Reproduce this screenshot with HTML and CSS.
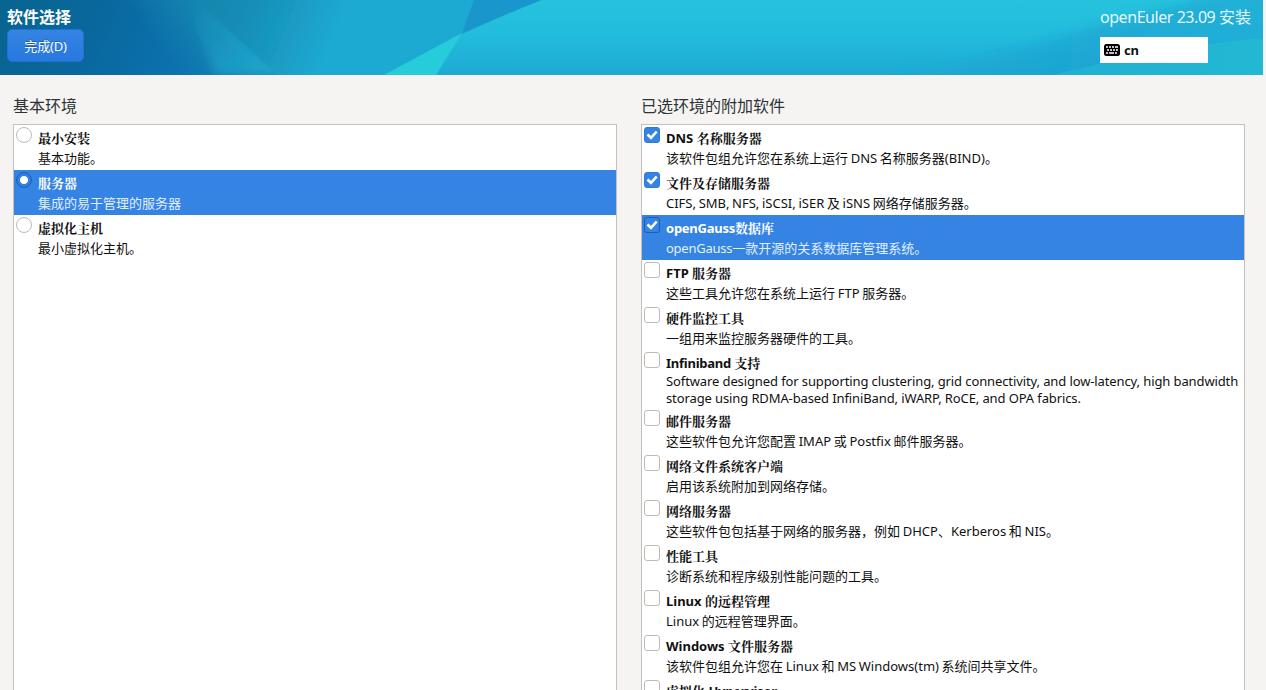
FILE: index.html
```
<!DOCTYPE html>
<html lang="zh-CN">
<head>
    <meta charset="UTF-8">
    <meta name="viewport" content="width=device-width, initial-scale=1.0">
    <title>软件选择</title>
    <link rel="stylesheet" href="styles.css">
</head>
<body>
    <div class="header">
        <svg class="header-bg" viewBox="0 0 1263 75" preserveAspectRatio="none">
            <defs>
                <linearGradient id="deep" gradientUnits="userSpaceOnUse" x1="0" y1="0" x2="190" y2="75">
                    <stop offset="0" stop-color="#086590"/>
                    <stop offset="0.45" stop-color="#09679c"/>
                    <stop offset="1" stop-color="#0c73b2"/>
                </linearGradient>
                <linearGradient id="beam" gradientUnits="userSpaceOnUse" x1="142" y1="22" x2="220" y2="-35">
                    <stop offset="0" stop-color="#1584ae" stop-opacity="0"/>
                    <stop offset="0.55" stop-color="#1584ae"/>
                    <stop offset="1" stop-color="#1994bd"/>
                </linearGradient>
                <linearGradient id="glow" gradientUnits="userSpaceOnUse" x1="190" y1="0" x2="250" y2="75">
                    <stop offset="0" stop-color="#1ea6cf" stop-opacity="0"/>
                    <stop offset="1" stop-color="#1ea6cf" stop-opacity="0.85"/>
                </linearGradient>
                <linearGradient id="blue" gradientUnits="userSpaceOnUse" x1="195" y1="0" x2="330" y2="55">
                    <stop offset="0" stop-color="#1485ae"/>
                    <stop offset="0.35" stop-color="#168db5"/>
                    <stop offset="1" stop-color="#1eaad3"/>
                </linearGradient>
                <linearGradient id="wave" x1="0" y1="0" x2="0" y2="1">
                    <stop offset="0" stop-color="#26c3dd"/>
                    <stop offset="0.5" stop-color="#22bbdc"/>
                    <stop offset="1" stop-color="#1daad2"/>
                </linearGradient>
                <linearGradient id="shade" gradientUnits="userSpaceOnUse" x1="1000" y1="-10" x2="1022" y2="90">
                    <stop offset="0.2" stop-color="#1b9fd0" stop-opacity="0"/>
                    <stop offset="1" stop-color="#1999cb"/>
                </linearGradient>
                <linearGradient id="fade" gradientUnits="userSpaceOnUse" x1="850" y1="0" x2="1263" y2="0">
                    <stop offset="0" stop-color="#1b9fd0" stop-opacity="0"/>
                    <stop offset="0.6" stop-color="#1b9fd0" stop-opacity="0.6"/>
                    <stop offset="1" stop-color="#1ba5d3" stop-opacity="0.6"/>
                </linearGradient>
                <linearGradient id="tail" x1="0" y1="0" x2="1" y2="0">
                    <stop offset="0" stop-color="#1fb0d2"/>
                    <stop offset="1" stop-color="#22b8d3"/>
                </linearGradient>
                <filter id="soft" x="-10%" y="-20%" width="120%" height="140%">
                    <feGaussianBlur stdDeviation="1"/>
                </filter>
                <filter id="softer" x="-10%" y="-50%" width="120%" height="200%">
                    <feGaussianBlur stdDeviation="5"/>
                </filter>
            </defs>
            <rect width="1263" height="75" fill="url(#deep)"/>
            <path d="M100 0H300V75H100Z" fill="url(#beam)"/>
            <path d="M185 0H300V75H215Z" fill="url(#glow)" filter="url(#softer)"/>
            <path d="M185 -10H560V85H288Z" fill="url(#blue)" filter="url(#soft)"/>
            <path d="M474 0H542L462 33Z" fill="#1997cd"/>
            <path d="M384 75C430 50 484 22 542 0H1263V75Z" fill="url(#wave)"/>
            <path d="M384 75L462 33L436 75Z" fill="#27ccda"/>
            <path d="M840 85C990 60 1120 18 1273 -20V85Z" fill="url(#fade)" filter="url(#softer)"/>
            <path d="M1053 75C1130 55 1200 44 1263 38V75Z" fill="url(#tail)"/>
        </svg>
        <div class="header-left">
            <h1>软件选择</h1>
            <button type="button" class="button">完成(D)</button>
        </div>
        <div class="header-right">
            <div class="product"><span>openEuler 23.09 </span>安装</div>
            <div class="keyboard">
                <svg width="16" height="12" viewBox="0 0 16 12">
                    <rect width="16" height="12" rx="2.5" fill="#000"/>
                    <path d="M2 3h2M5 3h2M8 3h2M11 3h3M3 6h2M6 6h2M9 6h2M12 6h2M2 9h2M5 9h5M11 9h2" stroke="#fff" stroke-width="1.7"/>
                </svg>
                <span>cn</span>
            </div>
        </div>
    </div>

    <div class="container">
        <div class="column">
            <h2>基本环境</h2>
            <div class="list">
                <div class="item">
                    <span class="radio"></span>
                    <div class="text"><b>最小安装</b><p>基本功能。</p></div>
                </div>
                <div class="item selected">
                    <span class="radio checked"></span>
                    <div class="text"><b>服务器</b><p>集成的易于管理的服务器</p></div>
                </div>
                <div class="item">
                    <span class="radio"></span>
                    <div class="text"><b>虚拟化主机</b><p>最小虚拟化主机。</p></div>
                </div>
            </div>
        </div>

        <div class="column">
            <h2>已选环境的附加软件</h2>
            <div class="list">
                <div class="item">
                    <span class="checkbox checked"><svg viewBox="0 0 16 16"><path d="M3.5 7.5L7 10.8L12.7 4.5"/></svg></span>
                    <div class="text"><b>DNS 名称服务器</b><p>该软件包组允许您在系统上运行 DNS 名称服务器(BIND)。</p></div>
                </div>
                <div class="item">
                    <span class="checkbox checked"><svg viewBox="0 0 16 16"><path d="M3.5 7.5L7 10.8L12.7 4.5"/></svg></span>
                    <div class="text"><b>文件及存储服务器</b><p>CIFS, SMB, NFS, iSCSI, iSER 及 iSNS 网络存储服务器。</p></div>
                </div>
                <div class="item selected">
                    <span class="checkbox checked"><svg viewBox="0 0 16 16"><path d="M3.5 7.5L7 10.8L12.7 4.5"/></svg></span>
                    <div class="text"><b><span class="tight">openGauss</span>数据库</b><p><span class="tight">openGauss</span>一款开源的关系数据库管理系统。</p></div>
                </div>
                <div class="item">
                    <span class="checkbox"></span>
                    <div class="text"><b>FTP 服务器</b><p>这些工具允许您在系统上运行 FTP 服务器。</p></div>
                </div>
                <div class="item">
                    <span class="checkbox"></span>
                    <div class="text"><b>硬件监控工具</b><p>一组用来监控服务器硬件的工具。</p></div>
                </div>
                <div class="item latin">
                    <span class="checkbox"></span>
                    <div class="text"><b><span class="tight">Infiniband</span> 支持</b><p>Software designed for supporting clustering, grid connectivity, and low-latency, high bandwidth<br>storage using RDMA-based InfiniBand, iWARP, RoCE, and OPA fabrics.</p></div>
                </div>
                <div class="item">
                    <span class="checkbox"></span>
                    <div class="text"><b>邮件服务器</b><p>这些软件包允许您配置 IMAP 或 Postfix 邮件服务器。</p></div>
                </div>
                <div class="item">
                    <span class="checkbox"></span>
                    <div class="text"><b>网络文件系统客户端</b><p>启用该系统附加到网络存储。</p></div>
                </div>
                <div class="item">
                    <span class="checkbox"></span>
                    <div class="text"><b>网络服务器</b><p>这些软件包包括基于网络的服务器，例如 DHCP、Kerberos 和 NIS。</p></div>
                </div>
                <div class="item">
                    <span class="checkbox"></span>
                    <div class="text"><b>性能工具</b><p>诊断系统和程序级别性能问题的工具。</p></div>
                </div>
                <div class="item">
                    <span class="checkbox"></span>
                    <div class="text"><b>Linux 的远程管理</b><p>Linux 的远程管理界面。</p></div>
                </div>
                <div class="item">
                    <span class="checkbox"></span>
                    <div class="text"><b>Windows 文件服务器</b><p>该软件包组允许您在 Linux 和 MS Windows(tm) 系统间共享文件。</p></div>
                </div>
                <div class="item">
                    <span class="checkbox"></span>
                    <div class="text"><b>虚拟化 <span class="tight">Hypervisor</span></b></div>
                </div>
            </div>
        </div>
    </div>
</body>
</html>
```
FILE: styles.css
```
* {
    box-sizing: border-box;
}

body {
    font-family: "Noto Sans", "Noto Sans CJK SC", sans-serif;
    font-size: 13px;
    margin: 0;
    height: 690px;
    overflow: hidden;
    display: flex;
    flex-direction: column;
    background-color: #f5f4f2;
    color: #111;
}

h1, h2, p {
    margin: 0;
}

.header {
    position: relative;
    flex: none;
    display: flex;
    justify-content: space-between;
    width: 1263px;
    height: 75px;
    padding: 5px 12px 0 7px;
    color: #fff;
}

.header-bg {
    position: absolute;
    top: 0;
    left: 0;
    width: 100%;
    height: 100%;
}

.header-left, .header-right {
    position: relative;
}

.header h1 {
    font-size: 16px;
    line-height: 24px;
    font-weight: bold;
}

.button {
    display: block;
    width: 77px;
    height: 33px;
    padding: 0 0 1px;
    border: 1px solid #2470d2;
    border-radius: 5px;
    background: linear-gradient(#3584e4, #2779df);
    color: #fff;
    font-family: inherit;
    font-size: 13px;
    letter-spacing: -0.2px;
    text-shadow: 0 -1px rgba(0, 0, 0, 0.25);
}

.header-right {
    width: 151px;
    white-space: nowrap;
}

.product {
    height: 32px;
    font-size: 16px;
    line-height: 24px;
    color: #e4f6fb;
}

.product span {
    letter-spacing: -0.45px;
}

.keyboard {
    display: flex;
    align-items: center;
    gap: 4px;
    width: 108px;
    height: 26px;
    padding-left: 4px;
    background-color: #fff;
    color: #111;
    font-weight: bold;
    letter-spacing: -0.3px;
}

.container {
    flex: 1;
    min-height: 0;
    overflow: hidden;
    display: flex;
    gap: 24px;
    padding: 19px 21px 0 13px;
}

.column {
    width: 604px;
}

.column h2 {
    font-size: 16px;
    line-height: 24px;
    height: 30px;
    font-weight: normal;
    color: #2e3436;
}

.list {
    height: 640px;
    border: 1px solid #c5c0bb;
    background-color: #fff;
    white-space: nowrap;
    overflow: hidden;
}

.item {
    display: flex;
    gap: 6px;
    height: 45px;
    padding: 2px 0 0 2px;
}

.item p {
    word-spacing: -0.7px;
}

.item.selected {
    background-color: #3584e4;
    color: #fff;
}

.item.selected p {
    color: #e1effd;
}

.item.latin {
    height: 58px;
}

.text {
    padding-top: 1px;
    line-height: 20px;
}

.text b {
    display: block;
    height: 20px;
    font-family: "Noto Sans", "Noto Serif CJK SC", "Noto Sans CJK SC", sans-serif;
}

.tight {
    letter-spacing: -0.25px;
}

.item.latin p {
    line-height: 17px;
    word-spacing: 0;
    letter-spacing: -0.11px;
}

.radio, .checkbox {
    flex: none;
    width: 16px;
    height: 16px;
    border: 1px solid #bfbab5;
    background-color: #fff;
}

.radio {
    border-radius: 50%;
}

.radio.checked {
    border-color: #185fb4;
    background: radial-gradient(circle, #fff 3.6px, #3080e3 4.4px);
}

.checkbox {
    border-radius: 3px;
}

.checkbox.checked {
    border-color: #3079d6;
    background-color: #3584e4;
}

.selected .checkbox.checked {
    border-color: #1b5fb5;
}

.checkbox svg {
    display: block;
    width: 16px;
    height: 16px;
    margin: -1px;
    fill: none;
    stroke: #fff;
    stroke-width: 2.6;
}
```
